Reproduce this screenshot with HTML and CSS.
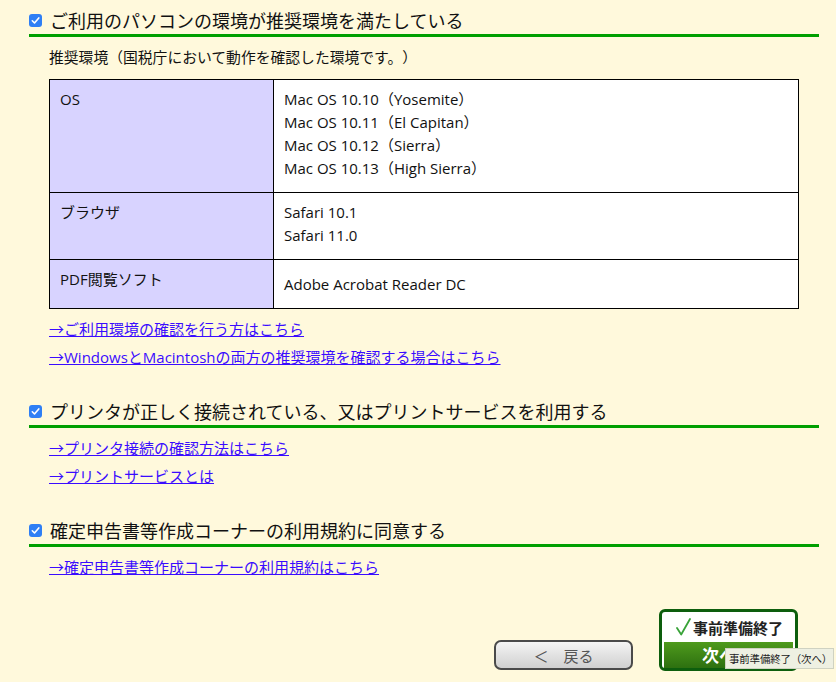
FILE: index.html
```html
<!DOCTYPE html>
<html lang="ja">
<head>
    <meta charset="UTF-8">
    <title>事前準備</title>
    <link rel="stylesheet" href="styles.css">
</head>
<body>
    <div id="pageContainer">
        <div class="check-section">
            <div class="check-heading">
                <svg class="check-box" width="13" height="13" viewBox="0 0 13 13"><rect width="13" height="13" rx="3" fill="#2f7ff5"/><path d="M3.3 6.8 L5.5 9 L9.8 3.9" fill="none" stroke="#fff" stroke-width="1.6" stroke-linecap="round" stroke-linejoin="round"/></svg>
                <span>ご利用のパソコンの環境が推奨環境を満たしている</span>
            </div>
            <div class="check-body">
                <div class="sub-title">推奨環境（国税庁において動作を確認した環境です。）</div>
                <table class="env-table">
                    <tr>
                        <th>OS</th>
                        <td>Mac OS 10.10（Yosemite）<br>Mac OS 10.11（El Capitan）<br>Mac OS 10.12（Sierra）<br>Mac OS 10.13（High Sierra）</td>
                    </tr>
                    <tr>
                        <th>ブラウザ</th>
                        <td>Safari 10.1<br>Safari 11.0</td>
                    </tr>
                    <tr class="row-pdf">
                        <th>PDF閲覧ソフト</th>
                        <td>Adobe Acrobat Reader DC</td>
                    </tr>
                </table>
                <div class="link-line"><a href="#">→ご利用環境の確認を行う方はこちら</a></div>
                <div class="link-line"><a href="#">→WindowsとMacintoshの両方の推奨環境を確認する場合はこちら</a></div>
            </div>
        </div>

        <div class="check-section">
            <div class="check-heading">
                <svg class="check-box" width="13" height="13" viewBox="0 0 13 13"><rect width="13" height="13" rx="3" fill="#2f7ff5"/><path d="M3.3 6.8 L5.5 9 L9.8 3.9" fill="none" stroke="#fff" stroke-width="1.6" stroke-linecap="round" stroke-linejoin="round"/></svg>
                <span>プリンタが正しく接続されている、又はプリントサービスを利用する</span>
            </div>
            <div class="check-body">
                <div class="link-line"><a href="#">→プリンタ接続の確認方法はこちら</a></div>
                <div class="link-line"><a href="#">→プリントサービスとは</a></div>
            </div>
        </div>

        <div class="check-section">
            <div class="check-heading">
                <svg class="check-box" width="13" height="13" viewBox="0 0 13 13"><rect width="13" height="13" rx="3" fill="#2f7ff5"/><path d="M3.3 6.8 L5.5 9 L9.8 3.9" fill="none" stroke="#fff" stroke-width="1.6" stroke-linecap="round" stroke-linejoin="round"/></svg>
                <span>確定申告書等作成コーナーの利用規約に同意する</span>
            </div>
            <div class="check-body">
                <div class="link-line"><a href="#">→確定申告書等作成コーナーの利用規約はこちら</a></div>
            </div>
        </div>

        <div class="button-row">
            <button class="btn-back">＜　戻る</button>
            <div class="btn-next">
                <div class="btn-next-top">
                    <svg width="15" height="18" viewBox="0 0 15 18"><path d="M1 10 L5.2 16.5 L14 1" fill="none" stroke="#39a339" stroke-width="1.8" stroke-linecap="round" stroke-linejoin="round"/></svg>
                    <span>事前準備終了</span>
                </div>
                <div class="btn-next-bottom">次へ</div>
                <div class="tooltip">事前準備終了（次へ）</div>
            </div>
        </div>
    </div>
</body>
</html>
```

FILE: styles.css
```css
body {
    margin: 0;
    background-color: #fff9dc;
    font-family: "Noto Sans CJK JP", "Noto Sans", sans-serif;
    color: #111;
    text-spacing-trim: space-all;
}
#pageContainer {
    padding: 8px 17px 0 29px;
    width: 790px;
    overflow: hidden;
    height: 674px;
}
.check-section {
    margin-bottom: 28px;
}
.check-heading {
    display: flex;
    align-items: center;
    gap: 8px;
    font-size: 18px;
    line-height: 24px;
    padding-bottom: 2px;
    border-bottom: 3px solid #009f00;
}
.check-box {
    flex-shrink: 0;
}
.check-body {
    padding: 6px 0 0 20px;
}
.sub-title {
    font-size: 14.8px;
    line-height: 28px;
}
.link-line {
    font-family: "Open Sans", "Noto Sans CJK JP", sans-serif;
    font-size: 15px;
    line-height: 28px;
}
.link-line a {
    color: #3a0cff;
}
.env-table {
    margin-top: 8px;
    margin-bottom: 6px;
    width: 750px;
    border-collapse: collapse;
    background-color: #fff;
    font-family: "Open Sans", "Noto Sans CJK JP", sans-serif;
    font-size: 15px;
    line-height: 23px;
}
.env-table th, .env-table td {
    border: 1px solid #000;
    padding: 8px 10px 12px 10px;
    text-align: left;
    font-weight: normal;
}
.env-table th {
    width: 203px;
    background-color: #d8d3ff;
    vertical-align: top;
}
.env-table td {
    vertical-align: middle;
}
.row-pdf th, .row-pdf td {
    height: 26px;
}
.row-pdf td {
    padding-top: 11px;
    padding-bottom: 11px;
}
.button-row {
    display: flex;
    justify-content: flex-end;
    align-items: flex-end;
    gap: 26px;
    margin-top: 1px;
    padding-right: 21px;
}
.btn-back {
    width: 139px;
    height: 30px;
    margin-bottom: 1px;
    border: 2px solid #4a4a4a;
    border-radius: 7px;
    background: linear-gradient(#f4f4f4, #d0d0d0);
    color: #555;
    font-family: "Noto Sans CJK JP", sans-serif;
    font-size: 15px;
}
.btn-next {
    position: relative;
    width: 133px;
    height: 56px;
    border: 3px solid #0d5e0d;
    border-radius: 6px;
    background-color: #fff;
}
.btn-next-top {
    display: flex;
    align-items: center;
    gap: 2px;
    height: 30px;
    padding-left: 14px;
    font-size: 15px;
    font-weight: bold;
    color: #222;
}
.btn-next-bottom {
    margin: 0 2px;
    height: 26px;
    background: linear-gradient(#4f9a1d, #2d7010);
    color: #fff;
    font-size: 17px;
    font-weight: bold;
    line-height: 26px;
    padding-left: 38px;
}
.tooltip {
    position: absolute;
    left: 63px;
    top: 36px;
    width: 104px;
    height: 19px;
    background-color: #eef0e2;
    border: 1px solid #cfd2c2;
    font-size: 10.5px;
    line-height: 19px;
    color: #222;
    padding-left: 3px;
    white-space: nowrap;
    letter-spacing: -0.2px;
    text-spacing-trim: normal;
}
```
